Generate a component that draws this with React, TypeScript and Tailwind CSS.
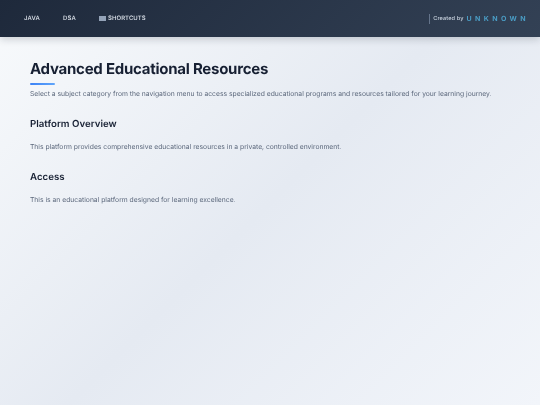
export default function App() {
  return (
    <div className="flex h-[405px] w-[540px] flex-col overflow-hidden bg-[linear-gradient(135deg,#f8fafc_0%,#e5eaf2_50%,#f2f5fa_100%)] font-['Inter',sans-serif] [text-rendering:geometricPrecision]">
      <header className="flex h-[37px] shrink-0 items-center justify-between bg-[linear-gradient(135deg,#1e293b_0%,#334155_100%)] pl-[24px] pr-[11px] shadow-[0_2px_8px_rgba(15,23,42,0.2)]">
        <nav className="flex items-center text-[6px] font-medium tracking-[0.2px] text-[#e2e8f0] [transform:translateZ(0)]">
          <span className="mr-[23px]">JAVA</span>
          <span className="mr-[23px]">DSA</span>
          <span className="flex items-center gap-[2px] tracking-[0.05px]">
            <span className="h-[5px] w-[7px] bg-[#94a3b8]" />
            SHORTCUTS
          </span>
        </nav>
        <div className="flex items-center border-l border-[#64748b] pl-[3px] leading-[10px] [transform:translateZ(0)]">
          <span className="text-[5.6px] font-medium tracking-[0.1px] text-[#cbd5e1]">Created by</span>
          <span className="ml-[3px] text-[7px] font-bold tracking-[3.4px] text-[#4a9cc4]">UNKNOWN</span>
        </div>
      </header>
      <main className="px-[30px] pt-[23px] [transform:translateZ(0)]">
        <h1 className="text-[15px] font-bold leading-[18px] tracking-[-0.25px] text-[#172033]">Advanced Educational Resources</h1>
        <div className="mt-[5px] h-[2px] w-[25px] rounded-sm bg-[linear-gradient(90deg,#3b82f6,#60a5fa)]" />
        <p className="mt-[3px] text-[6.75px] leading-[11px] text-[#5c687c]">
          Select a subject category from the navigation menu to access specialized educational programs and resources tailored for your learning journey.
        </p>
        <h2 className="mt-[19px] text-[9.7px] font-semibold leading-[14px] text-[#172033]">Platform Overview</h2>
        <p className="mt-[9px] text-[6.75px] leading-[11px] text-[#5c687c]">
          This platform provides comprehensive educational resources in a private, controlled environment.
        </p>
        <h2 className="mt-[19px] text-[9.7px] font-semibold leading-[14px] text-[#172033]">Access</h2>
        <p className="mt-[9px] text-[6.75px] leading-[11px] text-[#5c687c]">
          This is an educational platform designed for learning excellence.
        </p>
      </main>
    </div>
  );
}
